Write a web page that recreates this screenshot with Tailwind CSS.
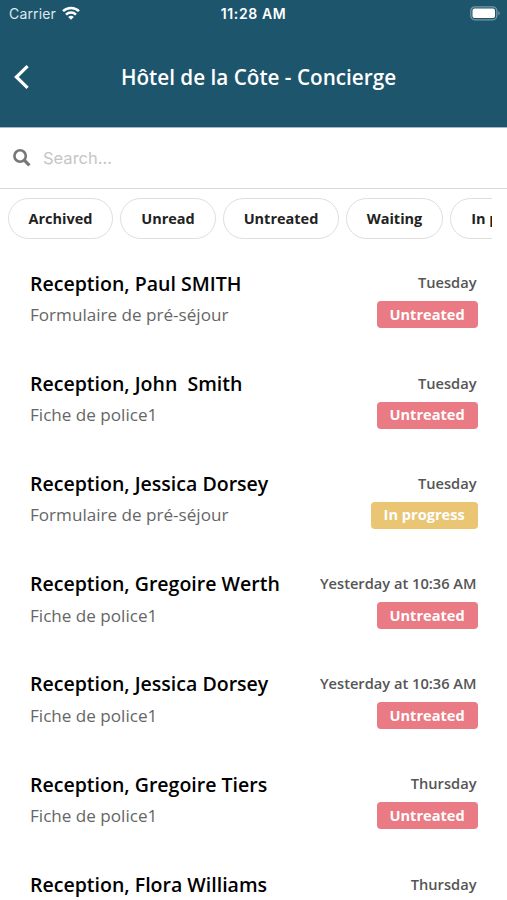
<!DOCTYPE html>
<html lang="en">
<head>
  <meta charset="UTF-8">
  <meta name="viewport" content="width=device-width, initial-scale=1.0">
  <title>Hôtel de la Côte - Concierge</title>
  <script src="https://cdn.jsdelivr.net/npm/@tailwindcss/browser@4"></script>
</head>
<body class="h-[900px] overflow-hidden bg-white font-['Open_Sans',sans-serif] text-black">
  <header class="h-32 border-b border-[#a5b9c2] bg-[#1d556d] text-white">
    <!-- Status bar -->
    <div class="grid h-[27px] grid-cols-3 items-center pl-[9px] pr-[7px] font-['Inter',sans-serif] text-[14px]">
      <div class="flex items-center gap-[6px] text-[#dfe8ec]">
        <span class="tracking-[0.15px]">Carrier</span>
        <svg class="mb-0.5 h-[14px] w-[18px]" viewBox="0 0 18 14" fill="none" stroke="#fff" stroke-width="2.5">
          <path d="M1 5.2a11.5 11.5 0 0 1 16 0"/>
          <path d="M4 8.6a7.2 7.2 0 0 1 10 0"/>
          <path d="M9 13.8 6.2 11a4 4 0 0 1 5.6 0Z" fill="#fff" stroke="none"/>
        </svg>
      </div>
      <span class="-ml-0.5 text-center font-semibold tracking-[0.6px] whitespace-nowrap">11:28 AM</span>
      <svg class="h-[15px] w-[30px] justify-self-end" viewBox="0 0 30 15" fill="none">
        <rect x=".8" y=".8" width="26" height="13" rx="4" stroke="#7797a5" stroke-width="1.3"/>
        <rect x="2.5" y="2.5" width="22.5" height="9.6" rx="2" fill="#fff"/>
        <path d="M28.3 5v4.6q1.4-.8 1.4-2.3t-1.4-2.3Z" fill="#7797a5"/>
      </svg>
    </div>
    <div class="grid h-[100px] grid-cols-[48px_1fr_38px] items-center">
      <svg class="ml-[13px] h-[26px] w-[18px]" viewBox="0 0 18 26" fill="none" stroke="#fff" stroke-width="3.2">
        <path d="M14.6 2.2 3.4 13l11.2 10.8"/>
      </svg>
      <h1 class="pt-0.5 text-center text-[20.7px] font-semibold">Hôtel de la Côte - Concierge</h1>
    </div>
  </header>

  <div class="flex h-[61px] items-center border-b border-[#d8d8d8] pl-[13px]">
    <svg class="h-[18px] w-[18px]" viewBox="0 0 18 18" fill="none" stroke="#777">
      <circle cx="7.1" cy="7" r="5.7" stroke-width="2.6"/>
      <path d="m11.2 11.2 5.2 5.2" stroke-width="3.2"/>
    </svg>
    <input class="ml-3 w-80 font-['Inter',sans-serif] text-[16.5px] outline-none placeholder:text-[#c5c5c7]" type="text" placeholder="Search...">
  </div>

  <nav class="ml-2 mr-[15px] flex h-[60px] items-center gap-[7px] overflow-hidden pb-px text-[14.5px] font-bold text-[#222]">
    <button class="h-[41px] w-[105px] shrink-0 rounded-full border border-[#dedede]">Archived</button>
    <button class="h-[41px] w-[96px] shrink-0 rounded-full border border-[#dedede]">Unread</button>
    <button class="h-[41px] w-[116px] shrink-0 rounded-full border border-[#dedede]">Untreated</button>
    <button class="h-[41px] w-[97px] shrink-0 rounded-full border border-[#dedede]">Waiting</button>
    <button class="h-[41px] w-[123px] shrink-0 rounded-full border border-[#dedede]">In progress</button>
  </nav>

  <main id="list" class="pt-[19.4px] pl-[30px] pr-[29.5px]"></main>

  <template id="row">
    <div class="h-[100.2px]">
      <div class="flex h-[30px] items-center justify-between">
        <h2 data-name class="text-[19.55px] font-semibold whitespace-pre"></h2>
        <time class="pr-px text-[14.65px] font-semibold text-[#555]"></time>
      </div>
      <div class="mt-[3px] flex h-[27px] items-center justify-between">
        <p class="text-[17.1px] text-[#666]"></p>
        <span data-status class="flex h-[27px] items-center rounded-[4px] px-[12.8px] text-[14.6px] font-bold text-white"></span>
      </div>
    </div>
  </template>

<script>
const conversations = [
  ['Paul SMITH', 'Formulaire de pré-séjour', 'Tuesday', 'Untreated'],
  ['John  Smith', 'Fiche de police1', 'Tuesday', 'Untreated'],
  ['Jessica Dorsey', 'Formulaire de pré-séjour', 'Tuesday', 'In progress'],
  ['Gregoire Werth', 'Fiche de police1', 'Yesterday at 10:36 AM', 'Untreated'],
  ['Jessica Dorsey', 'Fiche de police1', 'Yesterday at 10:36 AM', 'Untreated'],
  ['Gregoire Tiers', 'Fiche de police1', 'Thursday', 'Untreated'],
  ['Flora Williams', '', 'Thursday', ''],
];
const colors = { 'Untreated': 'bg-[#ea7a83]', 'In progress': 'bg-[#e9c574]' };

conversations.forEach(([name, subject, date, status]) => {
  const row = document.getElementById('row').content.cloneNode(true);
  row.querySelector('[data-name]').textContent = 'Reception, ' + name;
  row.querySelector('p').textContent = subject;
  row.querySelector('time').textContent = date;
  const badge = row.querySelector('[data-status]');
  badge.textContent = status;
  if (colors[status]) badge.classList.add(colors[status]);
  document.getElementById('list').appendChild(row);
});
</script>
</body>
</html>
